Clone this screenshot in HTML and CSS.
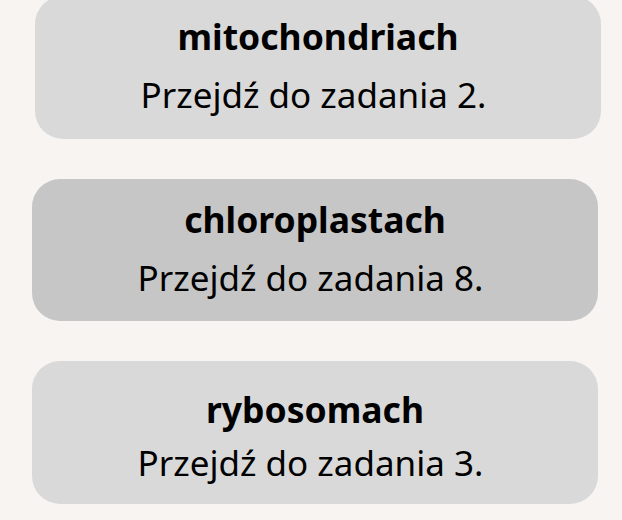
FILE: index.html
```html
<!DOCTYPE html>
<html lang="pl">
<head>
  <meta charset="UTF-8">
  <meta name="viewport" content="width=device-width, initial-scale=1.0">
  <title>Organella</title>
  <link rel="stylesheet" href="styles.css">
</head>
<body>
  <div class="choices">
    <a class="choice choice-shift" href="#zadanie-2">
      <span class="choice-title">mitochondriach</span>
      <span class="choice-go">Przejdź do zadania 2.</span>
    </a>
    <a class="choice choice-hover" href="#zadanie-8">
      <span class="choice-title">chloroplastach</span>
      <span class="choice-go">Przejdź do zadania 8.</span>
    </a>
    <a class="choice choice-tight" href="#zadanie-3">
      <span class="choice-title">rybosomach</span>
      <span class="choice-go">Przejdź do zadania 3.</span>
    </a>
  </div>
</body>
</html>
```

FILE: styles.css
```css
body {
  margin: 0;
  background: #f7f4f1;
  font-family: 'Noto Sans', 'Open Sans', sans-serif;
  color: #000;
}
.choices {
  display: flex;
  flex-direction: column;
  gap: 40px;
  width: 566px;
  margin: -4px 0 0 32px;
}
.choice {
  display: flex;
  flex-direction: column;
  align-items: center;
  gap: 17px;
  height: 142.5px;
  box-sizing: border-box;
  padding-top: 20px;
  background: #d9d9d9;
  border-radius: 28px;
  color: inherit;
  text-decoration: none;
}
.choice-title {
  font-size: 35.5px;
  line-height: 40px;
  font-weight: bold;
}
.choice-go {
  font-size: 35px;
  line-height: 44px;
  padding-right: 9px;
}
.choice-shift { margin-left: 3px; margin-right: -3px; }
.choice-hover { background: #c6c6c6; }
.choice-tight { padding-top: 28px; gap: 12px; }
```
